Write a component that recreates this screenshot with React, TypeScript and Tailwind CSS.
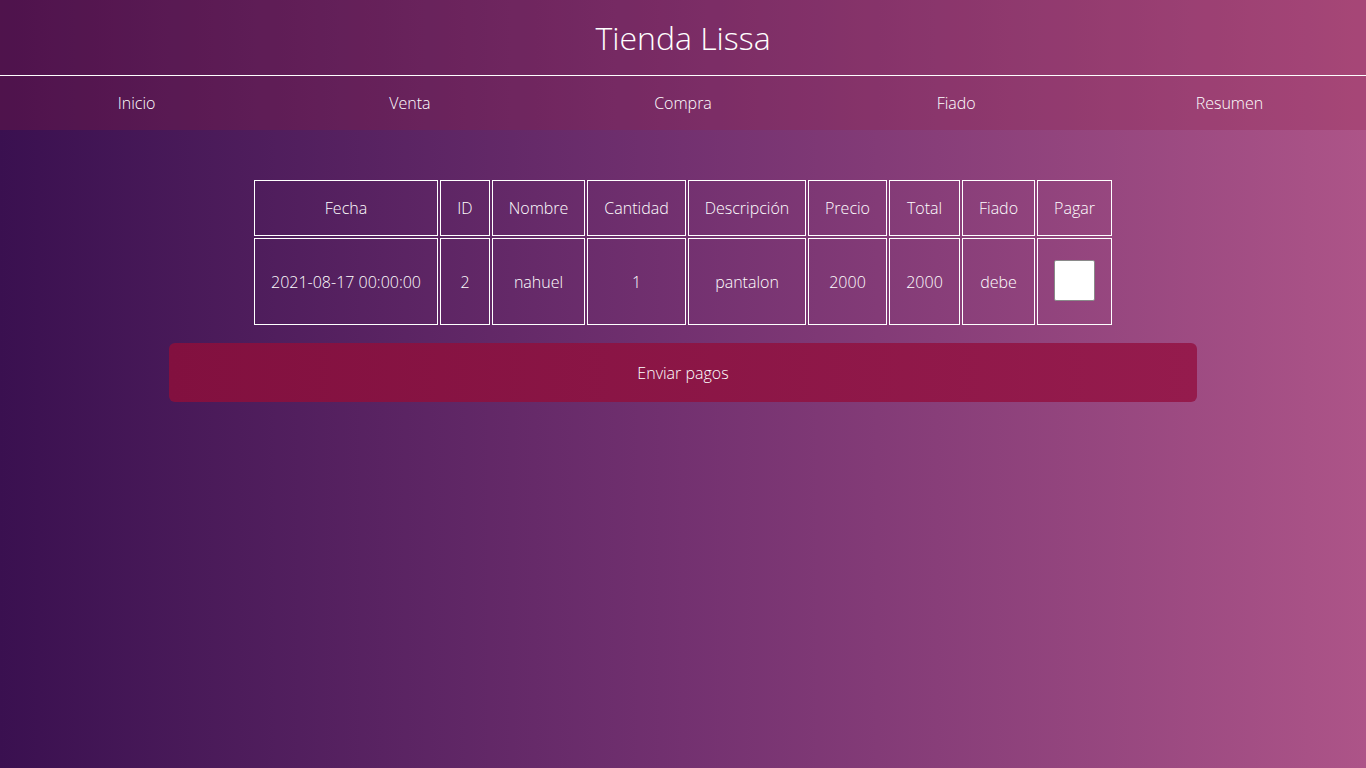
import React from "react";

const cols = [
  { h: "Fecha", v: "2021-08-17 00:00:00", w: "w-[184px]" },
  { h: "ID", v: "2", w: "w-[50px]" },
  { h: "Nombre", v: "nahuel", w: "w-[93px]" },
  { h: "Cantidad", v: "1", w: "w-[99px]" },
  { h: "Descripción", v: "pantalon", w: "w-[118px]" },
  { h: "Precio", v: "2000", w: "w-[79px]" },
  { h: "Total", v: "2000", w: "w-[71px]" },
  { h: "Fiado", v: "debe", w: "w-[73px]" },
];

export default function App() {
  return (
    <div
      className="min-h-[768px] w-full bg-gradient-to-r from-[#3a1050] via-[#733170] to-[#ad5488] text-white"
      style={{ fontFamily: '"Open Sans", "Noto Sans", sans-serif' }}
    >
      <header className="bg-[rgba(145,30,68,0.24)]">
        <div className="h-[75px] flex items-center justify-center">
          <h1 className="text-[32px] font-light leading-none">Tienda Lissa</h1>
        </div>
        <div className="h-px bg-white" />
        <nav className="h-[54px] flex items-center text-[16px] font-light">
          {["Inicio", "Venta", "Compra", "Fiado", "Resumen"].map((n) => (
            <a key={n} className="flex-1 text-center">
              {n}
            </a>
          ))}
        </nav>
      </header>

      <main className="flex flex-col items-center pt-[48px]">
        <table className="border-separate border-spacing-[2px] text-[16px] font-light">
          <thead>
            <tr>
              {cols.map((c) => (
                <th
                  key={c.h}
                  className={`${c.w} h-[56px] border border-white px-0 text-center font-light`}
                >
                  {c.h}
                </th>
              ))}
              <th className="w-[75px] h-[56px] border border-white px-0 text-center font-light">Pagar</th>
            </tr>
          </thead>
          <tbody>
            <tr>
              {cols.map((c) => (
                <td key={c.h} className={`${c.w} h-[87px] border border-white px-0 text-center whitespace-nowrap`}>
                  {c.v}
                </td>
              ))}
              <td className="w-[75px] h-[87px] border border-white px-0">
                <div className="flex justify-center">
                  <div className="w-[41px] h-[41px] bg-white border border-[#8a8a8a] rounded-[2px] -mt-[2px]" />
                </div>
              </td>
            </tr>
          </tbody>
        </table>
        <button className="mt-[16px] w-[1028px] h-[59px] rounded-[6px] bg-gradient-to-r from-[#82103f] to-[#951b4d] text-[16px] font-light text-white">
          Enviar pagos
        </button>
      </main>
    </div>
  );
}
